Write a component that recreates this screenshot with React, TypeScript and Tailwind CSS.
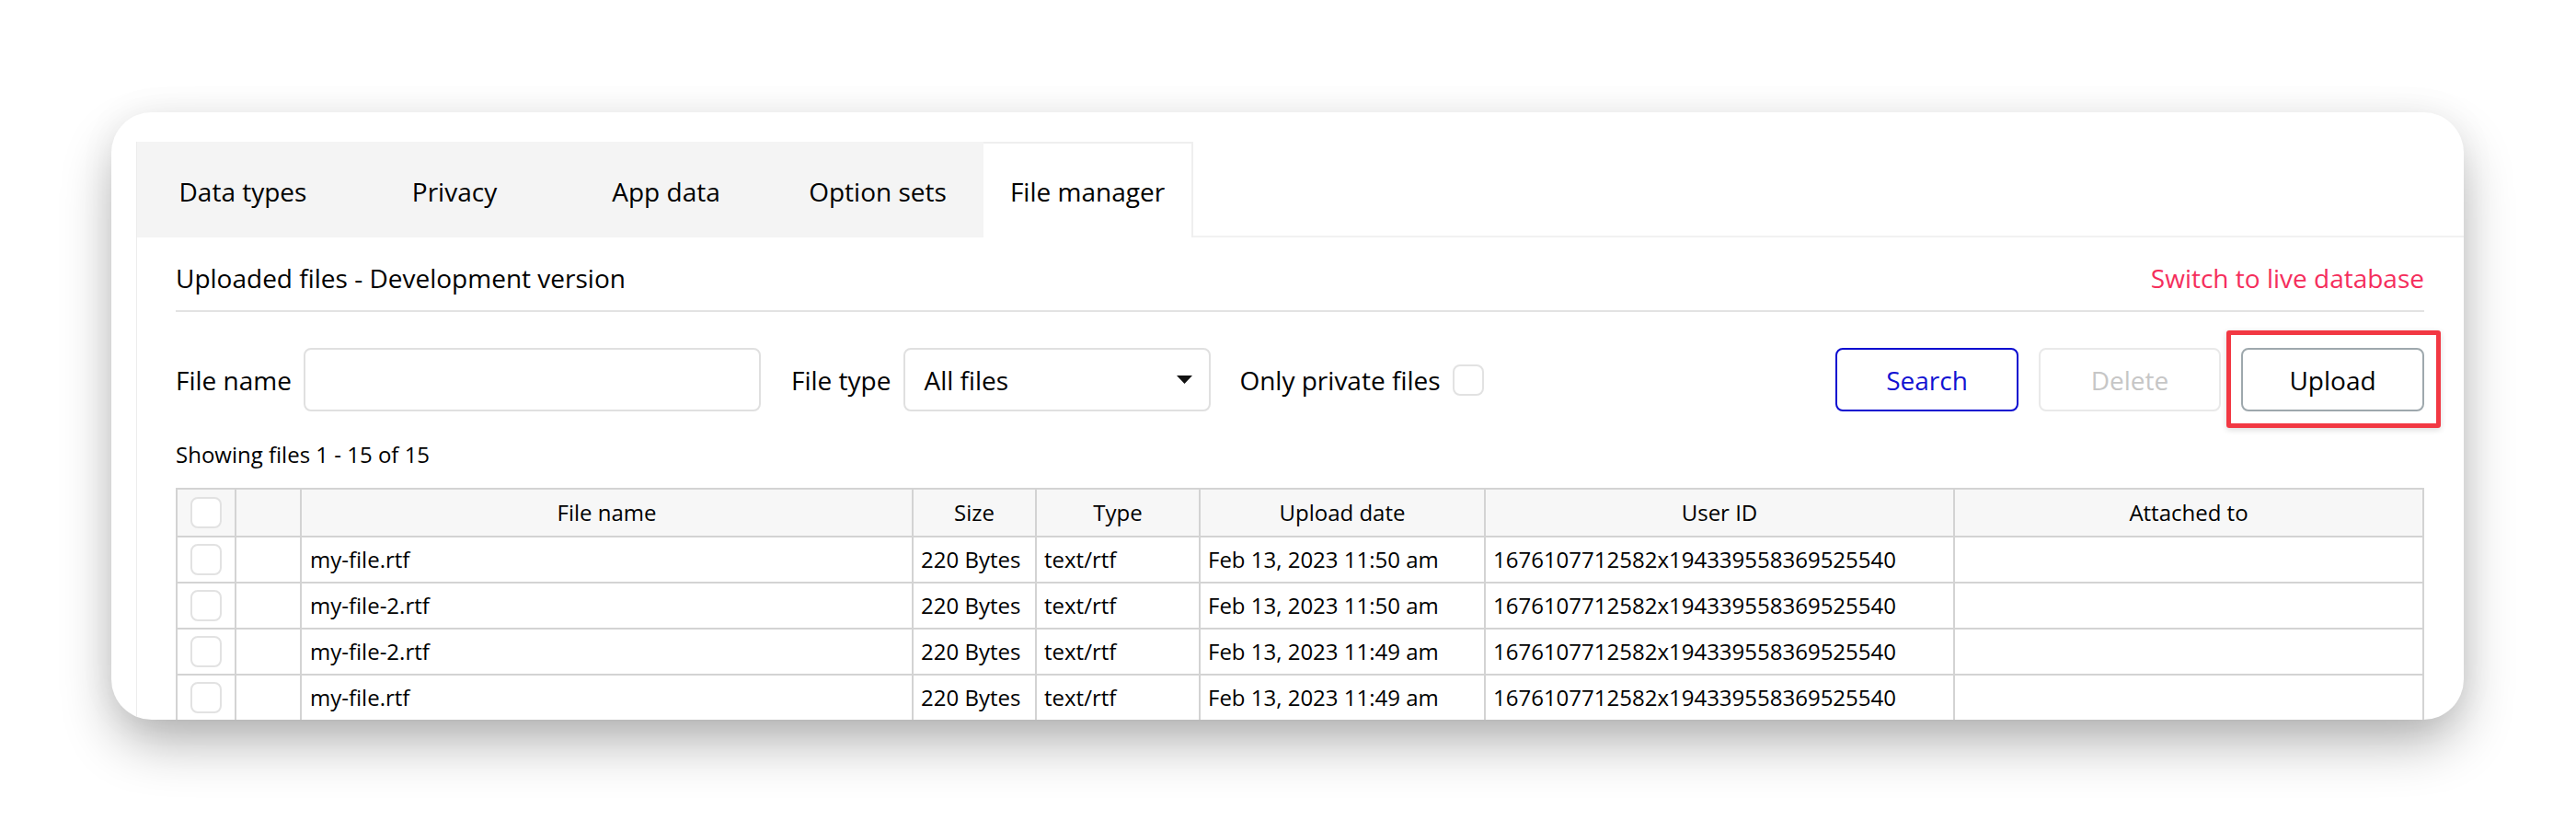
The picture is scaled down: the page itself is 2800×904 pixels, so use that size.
const tabs = ['Data types', 'Privacy', 'App data', 'Option sets'];

const columns = [
  { label: '', width: 'w-[64px]' },
  { label: '', width: 'w-[71px]' },
  { label: 'File name', width: 'w-[665px]' },
  { label: 'Size', width: 'w-[134px]' },
  { label: 'Type', width: 'w-[178px]' },
  { label: 'Upload date', width: 'w-[310px]' },
  { label: 'User ID', width: 'w-[510px]' },
  { label: 'Attached to', width: 'w-[510px]' },
];

const files = [
  { name: 'my-file.rtf', date: 'Feb 13, 2023 11:50 am' },
  { name: 'my-file-2.rtf', date: 'Feb 13, 2023 11:50 am' },
  { name: 'my-file-2.rtf', date: 'Feb 13, 2023 11:49 am' },
  { name: 'my-file.rtf', date: 'Feb 13, 2023 11:49 am' },
];

const userId = '1676107712582x194339558369525540';

function Checkbox() {
  return <div className="size-[34px] rounded-[8px] border-2 border-[#e2e2e2] bg-white" />;
}

function TabBar() {
  return (
    <div className="flex h-[104px] shrink-0">
      {tabs.map((tab) => (
        <div key={tab} className="flex w-[230px] items-center justify-center bg-[#f4f4f4] pt-[4px]">
          {tab}
        </div>
      ))}
      <div className="flex w-[228px] items-center justify-center border-t-2 border-r-2 border-[#efefef] bg-white pt-[2px]">
        File manager
      </div>
      <div className="flex-1 border-b-2 border-[#f2f2f2]" />
    </div>
  );
}

function FilterRow() {
  return (
    <div className="mt-[39px] flex h-[69px] items-center">
      <span>File name</span>
      <div className="ml-[13px] h-full w-[497px] rounded-[8px] border-2 border-[#e0e0e0]" />

      <span className="ml-[33px]">File type</span>
      <div className="ml-[14px] flex h-full w-[334px] items-center justify-between rounded-[8px] border-2 border-[#e0e0e0] pl-[20px] pr-[18px]">
        <span>All files</span>
        <svg width="17" height="9" viewBox="0 0 17 9">
          <path d="M0 0 L17 0 L8.5 9 Z" fill="#111" />
        </svg>
      </div>

      <span className="ml-[31px]">Only private files</span>
      <div className="ml-[13px]">
        <Checkbox />
      </div>

      <div className="ml-auto flex h-full gap-[22px]">
        <button className="h-full w-[199px] rounded-[8px] border-2 border-[#0a0ad0] text-[#1212d2]">
          Search
        </button>
        <button className="h-full w-[198px] rounded-[8px] border-2 border-[#e9e9e9] text-[#c6c6c6]">
          Delete
        </button>
        <div className="relative h-full">
          <button className="h-full w-[199px] rounded-[8px] border-2 border-[#9ea8ad] text-black">
            Upload
          </button>
          {/* annotation box */}
          <div className="pointer-events-none absolute -top-[19px] -right-[18px] -bottom-[18px] -left-[16px] rounded-[3px] border-[5px] border-[#f23843] shadow-[0_2px_6px_rgba(0,0,0,0.15)]" />
        </div>
      </div>
    </div>
  );
}

function FilesTable() {
  return (
    <table className="mt-[20px] w-full table-fixed border-collapse text-[24px]">
      <thead>
        <tr className="h-[52px] bg-[#f7f7f7]">
          {columns.map((col, i) => (
            <th key={i} className={`${col.width} border-2 border-[#d3d3d3] px-[9px] text-center font-normal`}>
              {i === 0 ? (
                <div className="flex justify-center">
                  <Checkbox />
                </div>
              ) : (
                col.label
              )}
            </th>
          ))}
        </tr>
      </thead>
      <tbody>
        {files.map((file, idx) => (
          <tr key={idx} className="h-[50px] bg-white">
            <td className="border-2 border-[#d3d3d3]">
              <div className="flex justify-center">
                <Checkbox />
              </div>
            </td>
            <td className="border-2 border-[#d3d3d3]" />
            <td className="border-2 border-[#d3d3d3] px-[9px] whitespace-nowrap">{file.name}</td>
            <td className="border-2 border-[#d3d3d3] px-[8px] whitespace-nowrap">220 Bytes</td>
            <td className="border-2 border-[#d3d3d3] px-[8px] whitespace-nowrap">text/rtf</td>
            <td className="border-2 border-[#d3d3d3] px-[8px] whitespace-nowrap">{file.date}</td>
            <td className="border-2 border-[#d3d3d3] px-[8px] whitespace-nowrap">{userId}</td>
            <td className="border-2 border-[#d3d3d3]" />
          </tr>
        ))}
      </tbody>
    </table>
  );
}

export default function App() {
  return (
    <div className="h-[904px] w-[2800px] overflow-hidden bg-white pt-[122px] pl-[121px] font-['Open_Sans',sans-serif] text-[28px] text-black">
      <div className="flex h-[660px] w-[2557px] overflow-hidden rounded-[44px] bg-white pt-[32px] pl-[27px] shadow-[0_28px_60px_-6px_rgba(0,0,0,0.32),0_0_40px_rgba(0,0,0,0.05)]">
        <div className="flex flex-1 flex-col border-l border-[#ececec]">
          <TabBar />

          <div className="pr-[45px] pl-[42px]">
            <div className="flex justify-between border-b-2 border-[#e3e3e3] pt-[25px] pb-[16px] leading-[38px]">
              <span>Uploaded files - Development version</span>
              <span className="text-[#f52e5c]">Switch to live database</span>
            </div>

            <FilterRow />

            <div className="mt-[31px] text-[24px] leading-[32px]">Showing files 1 - 15 of 15</div>

            <FilesTable />
          </div>
        </div>
      </div>
    </div>
  );
}
